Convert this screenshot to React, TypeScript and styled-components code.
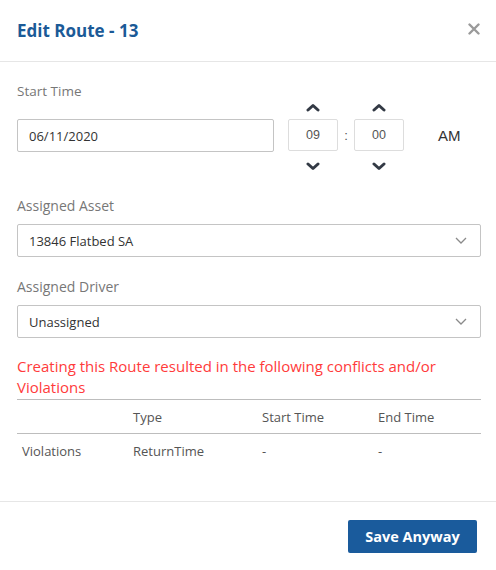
import styled, { createGlobalStyle } from "styled-components";

const GlobalStyle = createGlobalStyle`
  body {
    margin: 0;
    background: #ffffff;
    font-family: "Open Sans", "Liberation Sans", sans-serif;
  }
`;

const violations = [
  { kind: "Violations", type: "ReturnTime", start: "-", end: "-" },
];

function ChevronUp() {
  return (
    <svg width="14" height="10" viewBox="0 0 14 10">
      <polyline
        points="2,8 7,3.5 12,8"
        fill="none"
        stroke="#333a45"
        strokeWidth="3"
        strokeLinecap="round"
        strokeLinejoin="round"
      />
    </svg>
  );
}

function ChevronDown() {
  return (
    <svg width="14" height="10" viewBox="0 0 14 10">
      <polyline
        points="2,2 7,6.5 12,2"
        fill="none"
        stroke="#333a45"
        strokeWidth="3"
        strokeLinecap="round"
        strokeLinejoin="round"
      />
    </svg>
  );
}

function SelectCaret() {
  return (
    <svg width="12" height="8" viewBox="0 0 12 8">
      <polyline
        points="1,1 6,6 11,1"
        fill="none"
        stroke="#8a8a8a"
        strokeWidth="1.3"
      />
    </svg>
  );
}

export default function App() {
  return (
    <>
      <GlobalStyle />
      <Modal>
        <Header>
          <Title>Edit Route - 13</Title>
          <Close aria-label="close">
            <svg width="12" height="12" viewBox="0 0 12 12">
              <path
                d="M1.5 1.5 L10.5 10.5 M10.5 1.5 L1.5 10.5"
                stroke="#9a9a9a"
                strokeWidth="2.4"
                strokeLinecap="round"
              />
            </svg>
          </Close>
        </Header>

        <Body>
          <TimeGrid>
            <Label>Start Time</Label>
            <Arrow $col={2} $row={1} $align="end">
              <ChevronUp />
            </Arrow>
            <Arrow $col={4} $row={1} $align="end">
              <ChevronUp />
            </Arrow>

            <DateInput>06/11/2020</DateInput>
            <TimeBox $col={2}>09</TimeBox>
            <Colon>:</Colon>
            <TimeBox $col={4}>00</TimeBox>
            <Meridian>AM</Meridian>

            <Arrow $col={2} $row={3} $align="start">
              <ChevronDown />
            </Arrow>
            <Arrow $col={4} $row={3} $align="start">
              <ChevronDown />
            </Arrow>
          </TimeGrid>

          <Field>
            <FieldLabel>Assigned Asset</FieldLabel>
            <Select>
              <span>13846 Flatbed SA</span>
              <SelectCaret />
            </Select>
          </Field>

          <Field>
            <FieldLabel>Assigned Driver</FieldLabel>
            <Select>
              <span>Unassigned</span>
              <SelectCaret />
            </Select>
          </Field>

          <Warning>
            Creating this Route resulted in the following conflicts and/or
            Violations
          </Warning>

          <Table>
            <colgroup>
              <col style={{ width: 111 }} />
              <col style={{ width: 129 }} />
              <col style={{ width: 116 }} />
              <col />
            </colgroup>
            <thead>
              <tr>
                <Th></Th>
                <Th>Type</Th>
                <Th>Start Time</Th>
                <Th>End Time</Th>
              </tr>
            </thead>
            <tbody>
              {violations.map((v, i) => (
                <tr key={i}>
                  <Td>{v.kind}</Td>
                  <Td>{v.type}</Td>
                  <Td>{v.start}</Td>
                  <Td>{v.end}</Td>
                </tr>
              ))}
            </tbody>
          </Table>
        </Body>

        <Footer>
          <SaveButton>Save Anyway</SaveButton>
        </Footer>
      </Modal>
    </>
  );
}

const Modal = styled.div`
  width: 496px;
  background: #ffffff;
`;

const Header = styled.div`
  display: flex;
  align-items: center;
  justify-content: space-between;

  height: 61px;
  padding: 0 14px 0 17px;

  border-bottom: 1px solid #e6e6e6;
`;

const Title = styled.h1`
  margin: 0;

  color: #1b5a97;

  font-size: 17px;
  font-weight: 700;
`;

const Close = styled.div`
  display: flex;
  align-items: center;
  justify-content: center;

  width: 16px;
  height: 16px;
  margin-top: -4px;
`;

const Body = styled.div`
  padding: 20px 15px 34px 17px;
`;

const TimeGrid = styled.div`
  display: grid;
  grid-template-columns: 271px 50px 16px 50px 1fr;
  grid-template-rows: 37px 33px 24px;
`;

const Label = styled.div`
  grid-column: 1;
  grid-row: 1;
  align-self: start;

  color: #777777;

  font-size: 13.5px;
  line-height: 18px;
`;

const Arrow = styled.div<{ $col: number; $row: number; $align: string }>`
  display: flex;
  justify-content: center;

  grid-column: ${(p) => p.$col};
  grid-row: ${(p) => p.$row};
  align-self: ${(p) => p.$align};

  margin: ${(p) => (p.$align === "end" ? "0 0 7px" : "10px 0 0")};
`;

const DateInput = styled.div`
  display: flex;
  align-items: center;
  box-sizing: border-box;

  grid-column: 1;
  grid-row: 2;

  width: 257px;
  height: 33px;
  padding-left: 11px;

  border: 1px solid #c4c4c4;
  border-radius: 2px;

  color: #333333;

  font-size: 13px;
`;

const TimeBox = styled.div<{ $col: number }>`
  display: flex;
  align-items: center;
  justify-content: center;
  box-sizing: border-box;

  grid-column: ${(p) => p.$col};
  grid-row: 2;

  height: 32px;

  border: 1px solid #dddddd;
  border-radius: 2px;

  color: #555555;

  font-family: "Liberation Sans", Arial, sans-serif;
  font-size: 12.5px;
`;

const Colon = styled.div`
  display: flex;
  align-items: center;
  justify-content: center;

  grid-column: 3;
  grid-row: 2;

  color: #555555;

  font-family: "Liberation Sans", Arial, sans-serif;
  font-size: 13px;
`;

const Meridian = styled.div`
  display: flex;
  align-items: center;

  grid-column: 5;
  grid-row: 2;

  padding-left: 34px;

  color: #333333;

  font-family: "Liberation Sans", Arial, sans-serif;
  font-size: 15px;
`;

const Field = styled.div`
  margin-top: 21px;
`;

const FieldLabel = styled.div`
  margin-bottom: 9px;

  color: #777777;

  font-size: 14px;
  line-height: 18px;
`;

const Select = styled.div`
  display: flex;
  align-items: center;
  justify-content: space-between;
  box-sizing: border-box;

  height: 33px;
  padding: 0 13px 0 11px;

  border: 1px solid #c4c4c4;
  border-radius: 2px;

  color: #333333;

  font-size: 13px;
`;

const Warning = styled.div`
  margin-top: 18px;

  color: #ff3b3b;

  font-size: 15px;
  line-height: 21px;
`;

const Table = styled.table`
  width: 464px;
  margin-top: 1px;

  border-collapse: collapse;
  border-top: 1px solid #bdbdbd;

  table-layout: fixed;
`;

const Th = styled.th`
  height: 33px;
  padding: 0 5px;

  border-bottom: 1px solid #bdbdbd;

  color: #555555;

  font-size: 13px;
  font-weight: 400;
  text-align: left;
`;

const Td = styled.td`
  height: 33px;
  padding: 0 5px;

  color: #555555;

  font-size: 13px;
`;

const Footer = styled.div`
  display: flex;
  justify-content: flex-end;

  padding: 18px 19px 17px;

  border-top: 1px solid #e6e6e6;
`;

const SaveButton = styled.button`
  width: 129px;
  height: 33px;

  border: none;
  border-radius: 2px;

  background-color: #1a5b9c;

  color: #ffffff;

  font-family: "Open Sans", "Liberation Sans", sans-serif;
  font-size: 14.5px;
  font-weight: 700;
`;
